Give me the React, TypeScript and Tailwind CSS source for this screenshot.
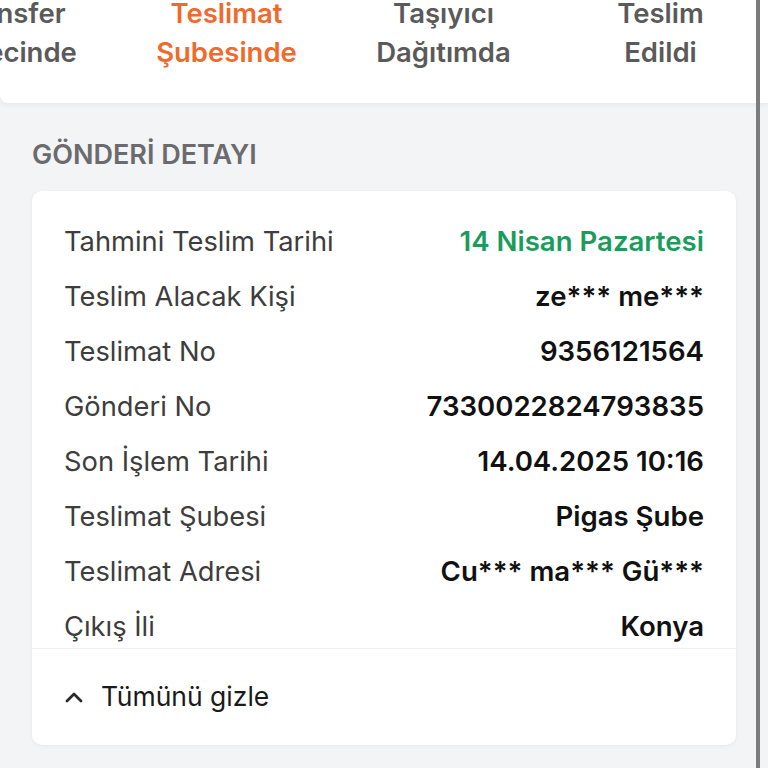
import React from 'react';

const steps = [
  { top: 'Transfer', bottom: 'Sürecinde', active: false },
  { top: 'Teslimat', bottom: 'Şubesinde', active: true },
  { top: 'Taşıyıcı', bottom: 'Dağıtımda', active: false },
  { top: 'Teslim', bottom: 'Edildi', active: false },
];

const details = [
  { label: 'Tahmini Teslim Tarihi', value: '14 Nisan Pazartesi', green: true },
  { label: 'Teslim Alacak Kişi', value: 'ze*** me***' },
  { label: 'Teslimat No', value: '9356121564' },
  { label: 'Gönderi No', value: '7330022824793835' },
  { label: 'Son İşlem Tarihi', value: '14.04.2025 10:16' },
  { label: 'Teslimat Şubesi', value: 'Pigas Şube' },
  { label: 'Teslimat Adresi', value: 'Cu*** ma*** Gü***' },
  { label: 'Çıkış İli', value: 'Konya' },
];

const App: React.FC = () => {
  return (
    <div className="relative h-[768px] w-full bg-[#f3f4f6] overflow-hidden font-['Inter',sans-serif]">
      <div className="flex flex-col">
        {/* Status steps */}
        <div className="h-[103px] shrink-0 bg-white rounded-bl-[8px] shadow-[0_2px_6px_rgba(0,0,0,0.05)] overflow-hidden">
          <div className="flex -ml-[99px] -mt-[6px] font-semibold text-[27.5px] leading-[39px]">
            {steps.map((s) => (
              <div
                key={s.top}
                className={`w-[217px] shrink-0 text-center ${s.active ? 'text-[#f06a2e]' : 'text-[#5a5a5a]'}`}
              >
                <div>{s.top}</div>
                <div>{s.bottom}</div>
              </div>
            ))}
          </div>
        </div>

        {/* Detail section */}
        <div className="px-[32px] pt-[37px]">
          <h2 className="font-semibold text-[27px] leading-[30px] text-[#6b6b6e] mb-[21px]">
            GÖNDERİ DETAYI
          </h2>
          <div className="bg-white rounded-[10px] shadow-[0_1px_4px_rgba(0,0,0,0.05)]">
            <div className="flex flex-col gap-[13px] px-[32px] pt-[30px] text-[27.3px]">
              {details.map((d) => (
                <div key={d.label} className="flex h-[42px] items-center justify-between">
                  <span className="text-[#3d3d3d]">{d.label}</span>
                  <span className={`font-semibold text-[27.6px] ${d.green ? 'text-[#1b9c5c]' : 'text-[#111111]'}`}>
                    {d.value}
                  </span>
                </div>
              ))}
            </div>
            <div className="border-t border-[#f0f0f0] h-[97px] flex items-center gap-[18px] px-[33px] text-[26.5px] text-[#1a1a1a]">
              <svg width="18" height="12" viewBox="0 0 18 12" fill="none">
                <polyline points="2,10 9,3 16,10" stroke="#2a2a2a" strokeWidth="2.8" strokeLinecap="round" strokeLinejoin="round" />
              </svg>
              <span>Tümünü gizle</span>
            </div>
          </div>
        </div>
      </div>
      {/* frame edge */}
      <div className="absolute top-0 bottom-0 left-[756px] w-[4px] bg-[#7c7c7c]" />
    </div>
  );
};

export default App;
